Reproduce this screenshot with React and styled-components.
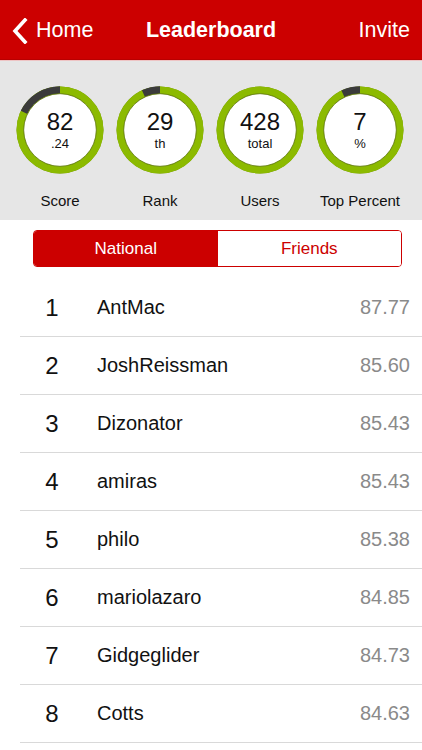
import React, { useState } from "react";
import styled, { createGlobalStyle } from "styled-components";

const GlobalStyle = createGlobalStyle`
  body {
    margin: 0;
    background: #fff;
    font-family: "Liberation Sans", Arial, sans-serif;
  }
`;

const stats = [
  { big: "82", small: ".24", label: "Score", dark: 0.1776 },
  { big: "29", small: "th", label: "Rank", dark: 0.068 },
  { big: "428", small: "total", label: "Users", dark: 0 },
  { big: "7", small: "%", label: "Top Percent", dark: 0.07 },
];

const players = [
  ["AntMac", "87.77"],
  ["JoshReissman", "85.60"],
  ["Dizonator", "85.43"],
  ["amiras", "85.43"],
  ["philo", "85.38"],
  ["mariolazaro", "84.85"],
  ["Gidgeglider", "84.73"],
  ["Cotts", "84.63"],
];

function arcPath(frac, r, c) {
  // arc from the top, running counter-clockwise
  const a = frac * 2 * Math.PI;
  const x = c - r * Math.sin(a);
  const y = c - r * Math.cos(a);
  const large = frac > 0.5 ? 1 : 0;
  return `M ${c} ${c - r} A ${r} ${r} 0 ${large} 0 ${x} ${y}`;
}

function Ring({ dark }) {
  return (
    <RingSvg viewBox="0 0 88 88">
      <circle cx="44" cy="44" r="43.5" fill="#6f8f08" />
      <circle cx="44" cy="44" r="40" fill="none" stroke="#8cba00" strokeWidth="7" />
      {dark > 0 && (
        <path d={arcPath(dark, 40, 44)} fill="none" stroke="#3b3b3b" strokeWidth="7.4" />
      )}
      <circle cx="44" cy="44" r="36.3" fill="#fff" stroke="#5f7a08" strokeWidth="0.8" />
    </RingSvg>
  );
}

export default function App() {
  const [tab, setTab] = useState("national");
  return (
    <Page>
      <GlobalStyle />
      <NavBar>
        <NavSide>
          <svg width="16" height="26" viewBox="0 0 16 26">
            <path d="M13 2 L3 13 L13 24" fill="none" stroke="#fff" strokeWidth="3.6" strokeLinecap="square" />
          </svg>
          <span>Home</span>
        </NavSide>
        <NavTitle>Leaderboard</NavTitle>
        <NavSide $right>Invite</NavSide>
      </NavBar>

      <StatsPanel>
        {stats.map((s) => (
          <Stat key={s.label}>
            <RingWrap>
              <Ring dark={s.dark} />
              <RingText>
                <Big>{s.big}</Big>
                <Small>{s.small}</Small>
              </RingText>
            </RingWrap>
            <StatLabel>{s.label}</StatLabel>
          </Stat>
        ))}
      </StatsPanel>

      <Segmented>
        <Segment $active={tab === "national"} onClick={() => setTab("national")}>
          National
        </Segment>
        <Segment $active={tab === "friends"} onClick={() => setTab("friends")}>
          Friends
        </Segment>
      </Segmented>

      <List>
        {players.map(([name, score], i) => (
          <Row key={name}>
            <Rank>{i + 1}</Rank>
            <Name>{name}</Name>
            <Points>{score}</Points>
          </Row>
        ))}
      </List>
    </Page>
  );
}

const Page = styled.div`
  width: 422px;
  height: 750px;
  overflow: hidden;
  background: #fff;
`;

const NavBar = styled.div`
  height: 59px;
  background: #cc0000;
  border-bottom: 1px solid #b80000;
  display: grid;
  grid-template-columns: 1fr auto 1fr;
  align-items: center;
  padding: 0 12px 0 12px;
  color: #fff;
`;

const NavSide = styled.div`
  display: flex;
  align-items: center;
  justify-content: ${(p) => (p.$right ? "flex-end" : "flex-start")};
  gap: 8px;
  font-size: 21.5px;
  padding-top: 2px;
`;

const NavTitle = styled.div`
  font-size: 21.5px;
  font-weight: bold;
  padding-top: 2px;
`;

const StatsPanel = styled.div`
  height: 160px;
  background: #e6e6e6;
  border-top: 1px solid #eec4c4;
  box-sizing: border-box;
  display: grid;
  grid-template-columns: repeat(4, 100px);
  padding: 25px 11px 0 10px;
`;

const Stat = styled.div`
  display: flex;
  flex-direction: column;
  align-items: center;
`;

const RingWrap = styled.div`
  position: relative;
  width: 88px;
  height: 88px;
`;

const RingSvg = styled.svg`
  display: block;
  width: 88px;
  height: 88px;
`;

const RingText = styled.div`
  position: absolute;
  inset: 0;
  display: flex;
  flex-direction: column;
  align-items: center;
  justify-content: center;
  color: #111;
  padding-top: 2px;
`;

const Big = styled.div`
  font-size: 24px;
  line-height: 24px;
`;

const Small = styled.div`
  font-size: 13px;
  line-height: 16px;
  margin-top: 2px;
`;

const StatLabel = styled.div`
  margin-top: 18px;
  font-size: 15px;
  color: #111;
`;

const Segmented = styled.div`
  margin: 10px 20px 0 33px;
  height: 37px;
  border: 1px solid #cc0000;
  border-radius: 4px;
  box-sizing: border-box;
  display: grid;
  grid-template-columns: 1fr 1fr;
  overflow: hidden;
`;

const Segment = styled.div`
  display: flex;
  align-items: center;
  justify-content: center;
  font-size: 17px;
  background: ${(p) => (p.$active ? "#cc0000" : "#fff")};
  color: ${(p) => (p.$active ? "#fff" : "#cc0000")};
  cursor: pointer;
`;

const List = styled.div`
  margin-top: 12px;
  padding-left: 20px;
`;

const Row = styled.div`
  height: 58px;
  display: flex;
  align-items: center;
  border-bottom: 1px solid #d9d9d9;
  box-sizing: border-box;
  padding-right: 12px;
`;

const Rank = styled.div`
  width: 64px;
  text-align: center;
  font-size: 24px;
  color: #111;
`;

const Name = styled.div`
  flex: 1;
  padding-left: 13px;
  font-size: 20px;
  color: #111;
`;

const Points = styled.div`
  font-size: 20px;
  color: #8a8a8a;
`;
